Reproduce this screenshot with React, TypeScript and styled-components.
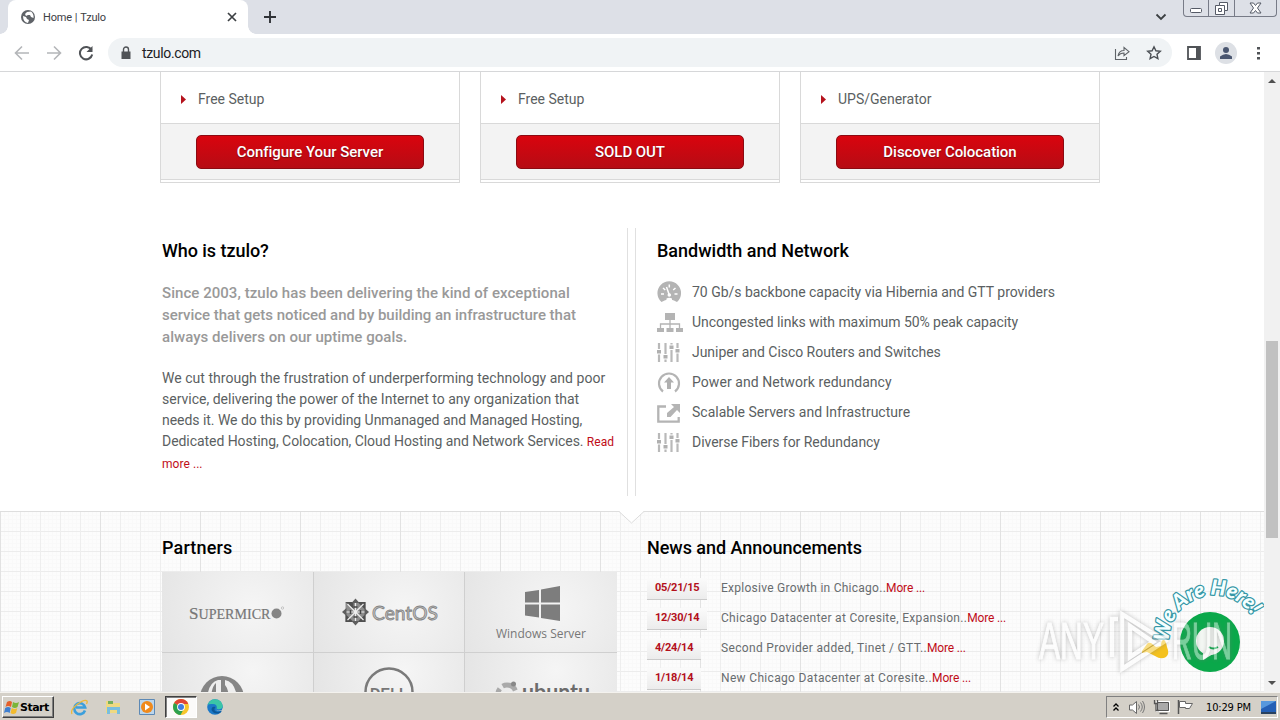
import type { ReactNode } from "react";
import styled, { createGlobalStyle, css } from "styled-components";

const GlobalStyle = createGlobalStyle`
  * {
    box-sizing: border-box;
  }
  body {
    margin: 0;
    overflow: hidden;
    font-family: Roboto, "Liberation Sans", sans-serif;
  }
  svg {
    display: block;
    flex-shrink: 0;
  }
`;

const Screen = styled.div`
  position: relative;
  width: 1280px;
  height: 720px;
  display: flex;
  flex-direction: column;
  overflow: hidden;
  background: #fff;
`;

/* browser chrome */

const TabStrip = styled.div`
  height: 34px;
  display: flex;
  background: #dde0e7;
  padding-left: 8px;
`;

const Tab = styled.div`
  position: relative;
  width: 240px;
  height: 34px;
  padding: 0 10px 0 13px;
  display: flex;
  align-items: center;
  background: #fff;
  border-radius: 8px 8px 0 0;
  &::before,
  &::after {
    content: "";
    position: absolute;
    bottom: 0;
    width: 8px;
    height: 8px;
  }
  &::before {
    left: -8px;
    background: radial-gradient(circle at 0 0, transparent 7.5px, #fff 8px);
  }
  &::after {
    right: -8px;
    background: radial-gradient(circle at 100% 0, transparent 7.5px, #fff 8px);
  }
`;

const TabTitle = styled.span`
  flex: 1;
  margin-left: 8px;
  font-size: 11px;
  letter-spacing: -0.2px;
  word-spacing: 0.5px;
  color: #3c4043;
`;

const NewTab = styled.div`
  padding: 11px 0 0 16px;
`;

const StripRight = styled.div`
  margin-left: auto;
  display: flex;
  align-items: flex-start;
`;

const Chevron = styled.div`
  padding: 13px 16px 0 0;
`;

const WindowButtons = styled.div`
  display: flex;
  width: 94px;
  height: 17px;
  margin-right: 3px;
  border: 1px solid #777b87;
  border-top: none;
  border-radius: 0 0 4px 4px;
`;

const WindowButton = styled.div<{ $w: number }>`
  width: ${(p) => p.$w}px;
  display: flex;
  align-items: center;
  justify-content: center;
  & + & {
    border-left: 1px solid #777b87;
  }
`;

const Toolbar = styled.div`
  height: 38px;
  display: flex;
  align-items: center;
  padding: 0 14px;
  border-bottom: 1px solid #d6d7d9;
  background: #fff;
`;

const NavButtons = styled.div`
  display: flex;
  width: 94px;
  gap: 16px;
`;

const AddressBar = styled.div`
  width: 1064px;
  height: 29px;
  border-radius: 15px;
  background: #f0f3f5;
  display: flex;
  align-items: center;
  padding: 0 10px 0 12px;
`;

const Url = styled.span`
  flex: 1;
  margin-left: 10px;
  font-size: 14px;
  letter-spacing: -0.35px;
  color: #202124;
`;

const BarIcons = styled.div`
  display: flex;
  gap: 16px;
`;

const ToolbarRight = styled.div`
  display: flex;
  align-items: center;
  margin-left: 15px;
  gap: 14px;
`;

const Avatar = styled.div`
  width: 22px;
  height: 22px;
  border-radius: 50%;
  background: #dde0e5;
  display: flex;
  align-items: center;
  justify-content: center;
`;

/* page */

const Viewport = styled.div`
  height: 620px;
  display: flex;
`;

const Page = styled.div`
  width: 1264px;
  height: 620px;
  overflow: hidden;
  display: flex;
  flex-direction: column;
`;

const Scrollbar = styled.div`
  width: 16px;
  display: flex;
  flex-direction: column;
  align-items: center;
  justify-content: space-between;
  background: #f1f1f1;
  padding: 7px 0 7px;
`;

const Thumb = styled.div`
  width: 12px;
  height: 197px;
  margin-top: 114px;
  background: #c1c1c1;
`;

const Cards = styled.div`
  flex-shrink: 0;
  display: flex;
  gap: 20px;
  padding-left: 160px;
`;

const Card = styled.div`
  width: 300px;
  height: 111px;
  border: 1px solid #d9d9d9;
  border-top: none;
`;

const Feature = styled.div`
  height: 51px;
  display: flex;
  align-items: center;
  gap: 12px;
  padding: 3px 0 0 20px;
  font-size: 14px;
  color: #5b5f62;
`;

const CardFooter = styled.div`
  height: 57px;
  padding: 11px 35px 0;
  background: #f3f3f3;
  border-top: 1px solid #d9d9d9;
  border-bottom: 1px solid #d9d9d9;
`;

const RedButton = styled.button`
  display: block;
  width: 228px;
  height: 34px;
  padding: 0;
  border: 1px solid #8c0a12;
  border-radius: 5px;
  background: linear-gradient(#d9040e, #b60c14);
  font-family: inherit;
  font-size: 15px;
  font-weight: 500;
  letter-spacing: -0.05px;
  color: #fff;
  text-shadow: 0 1px 1px #7d0a10;
`;

const Info = styled.div`
  flex-shrink: 0;
  height: 268px;
  margin: 45px 0 15px;
  padding-left: 162px;
  display: flex;
`;

const About = styled.div`
  width: 465px;
  padding-top: 12px;
  white-space: nowrap;
`;

const Divider = styled.div`
  width: 9px;
  border-left: 1px solid #e0e0e0;
  border-right: 1px solid #e0e0e0;
`;

const Network = styled.div`
  padding: 12px 0 0 21px;
`;

const Heading = styled.h2<{ $spacing?: number }>`
  margin: 0;
  font-size: 18px;
  line-height: 22px;
  font-weight: 500;
  letter-spacing: ${(p) => p.$spacing ?? 0}px;
  color: #000;
`;

const Lead = styled.p`
  margin: 20px 0 20px;
  font-size: 15px;
  line-height: 22px;
  font-weight: 500;
  color: #999;
`;

const Text = styled.p`
  margin: 0;
  font-size: 14px;
  line-height: 21px;
  color: #5b5f62;
`;

const Line = styled.span<{ $spacing: number }>`
  display: block;
  letter-spacing: ${(p) => p.$spacing}px;
`;

const RedLink = styled.a`
  font-size: 12px;
  letter-spacing: 0.05px;
  color: #c00d18;
`;

const FeatureRow = styled.div<{ $spacing: number }>`
  height: 30px;
  display: flex;
  align-items: center;
  gap: 9px;
  font-size: 14px;
  color: #5b5f62;
  letter-spacing: ${(p) => p.$spacing}px;
  white-space: nowrap;
`;

const FeatureList = styled.div`
  margin-top: 15px;
`;

const Lower = styled.div`
  position: relative;
  flex-shrink: 0;
  height: 181px;
  display: flex;
  padding: 25px 0 0 162px;
  border-top: 1px solid #dedede;
  background-color: #fcfcfc;
  background-image:
    linear-gradient(90deg, #e2e2e2 1px, transparent 1px),
    linear-gradient(90deg, #eeeeee 1px, transparent 1px),
    linear-gradient(#ececec 1px, transparent 1px),
    linear-gradient(90deg, #f9f9f9 1px, transparent 1px),
    linear-gradient(#f9f9f9 1px, transparent 1px);
  background-size: 100px 100px, 20px 20px, 20px 20px, 4px 4px, 4px 4px;
  background-position: 0 0, 0 0, 0 19px, 0 0, 0 3px;
`;

const Notch = styled.div`
  position: absolute;
  left: 619px;
  top: -1px;
`;

const Partners = styled.div`
  width: 485px;
`;

const PartnerGrid = styled.div`
  width: 455px;
  margin-top: 13px;
  display: grid;
  grid-template-columns: 152px 151px 152px;
  grid-template-rows: 81px 39px;
`;

const Partner = styled.div<{ $edge?: boolean }>`
  overflow: hidden;
  border-bottom: 1px solid #cfcfcf;
  ${(p) =>
    !p.$edge &&
    css`
      border-right: 1px solid #cfcfcf;
    `}
  background: radial-gradient(circle at 60% 45%, #f5f5f5, #e3e3e3 110%);
  &:nth-child(n + 4) {
    border-bottom: none;
  }
`;

const News = styled.div`
  white-space: nowrap;
`;

const NewsList = styled.div`
  margin-top: 13px;
`;

const NewsRow = styled.div`
  height: 30px;
  display: flex;
  align-items: center;
`;

const DateCell = styled.div`
  width: 74px;
  display: flex;
`;

const DateBadge = styled.div<{ $w: number }>`
  width: ${(p) => p.$w}px;
  height: 22px;
  margin-top: 3px;
  padding-left: 8px;
  line-height: 20px;
  font-size: 11px;
  font-weight: 700;
  letter-spacing: -0.2px;
  color: #b30f1b;
  background: linear-gradient(#fbfbfb, #ececec);
  border-bottom: 1px solid #cbcbcb;
`;

const NewsText = styled.span<{ $spacing: number }>`
  padding-top: 2px;
  font-size: 12px;
  color: #686c6f;
  letter-spacing: ${(p) => p.$spacing}px;
  ${RedLink} {
    letter-spacing: -0.15px;
  }
`;

const Chat = styled.div`
  position: absolute;
  left: 1140px;
  top: 576px;
`;

const Watermark = styled.div`
  position: absolute;
  left: 1030px;
  top: 602px;
  opacity: 0.45;
  filter: drop-shadow(0 0 2px #777);
`;

/* taskbar */

const Taskbar = styled.div`
  position: relative;
  height: 28px;
  display: flex;
  align-items: center;
  padding: 2px 2px 0;
  background: #d4d0c8;
  box-shadow: inset 0 2px 0 -1px #f4f2ee;
`;

const StartButton = styled.div`
  width: 52px;
  height: 22px;
  display: flex;
  align-items: center;
  padding-left: 1px;
  font-family: "DejaVu Sans", sans-serif;
  font-size: 11px;
  font-weight: 700;
  letter-spacing: -0.5px;
  color: #000;
  border: 1px solid;
  border-color: #fff #404040 #404040 #fff;
  box-shadow: inset -1px -1px 0 #808080;
`;

const Launchers = styled.div`
  display: flex;
  align-items: center;
  margin-left: 8px;
`;

const Launcher = styled.div<{ $active?: boolean }>`
  width: 34px;
  height: 22px;
  display: flex;
  align-items: center;
  justify-content: center;
  ${(p) =>
    p.$active &&
    css`
      width: 32px;
      margin: 0 1px;
      background: #fbfaf9;
      border: 1px solid;
      border-color: #404040 #fff #fff #404040;
      box-shadow: inset 1px 1px 0 #808080;
    `}
`;

const Tray = styled.div`
  margin-left: auto;
  width: 172px;
  height: 22px;
  display: flex;
  align-items: center;
  padding-left: 5px;
  border: 1px solid;
  border-color: #808080 #fff #fff #808080;
`;

const Clock = styled.span`
  margin: 0 9px 0 13px;
  width: 46px;
  white-space: nowrap;
  font-family: "DejaVu Sans Condensed", "DejaVu Sans", sans-serif;
  font-stretch: condensed;
  font-size: 11px;
  letter-spacing: -0.15px;
  color: #000;
`;

const GaugeIcon = () => (
  <svg width="26" height="24" viewBox="0 0 26 24">
    <path d="M4.500 22A11.800 11.800 0 1 1 20 22L17 20.500Q12 18.500 7.500 20.500Z" fill="#b4b4b4" />
    <path d="M4 14h3M17.500 14h3M6 8l2.300 2M18.500 8l-2.300 2M12.300 4.500v3M12.300 15L9.500 7" stroke="#fff" strokeWidth="1.500" />
    <path d="M9.500 24v-5.500q2.800-1.500 5.500 0V24z" fill="#fff" />
    <circle cx="12.300" cy="15" r="1.800" fill="#fff" />
  </svg>
);

const TreeIcon = () => (
  <svg width="26" height="24" viewBox="0 0 26 24">
    <path d="M8 3h10v7H8zM0 18h7v4H0zM9.500 18h7v4h-7zM19 18h7v4h-7z" fill="#b4b4b4" />
    <path d="M13 10v8M3.500 18v-4h19v4" fill="none" stroke="#b4b4b4" strokeWidth="1.300" />
  </svg>
);

const SlidersIcon = () => (
  <svg width="26" height="24" viewBox="0 0 26 24">
    <path d="M2 3v19M8.500 3v19M14.500 3v19M20.500 3v19" stroke="#b9b9b9" strokeWidth="2.200" />
    <path d="M0 11.700h4M6.500 16.700h4M12.500 7.200h4M18.500 10.700h4" stroke="#fff" strokeWidth="5.500" />
    <path d="M0 11.700h4M6.500 16.700h4M12.500 7.200h4M18.500 10.700h4" stroke="#b0b0b0" strokeWidth="3.400" />
  </svg>
);

const UploadIcon = () => (
  <svg width="26" height="24" viewBox="0 0 26 24">
    <path d="M6 21.500A10 10 0 1 1 18 21.500" fill="none" stroke="#b4b4b4" strokeWidth="2.200" />
    <path d="M12 7l5 5.500h-3V19h-4v-6.500H7z" fill="#b0b0b0" />
  </svg>
);

const ShareOutIcon = () => (
  <svg width="26" height="24" viewBox="0 0 26 24">
    <path d="M9 6.500H1.300v15.200h20.400V17" fill="none" stroke="#b4b4b4" strokeWidth="2.300" />
    <path d="M14 4h9v9l-3-3-6.500 7h-3.500V13L17 7z" fill="#b4b4b4" />
  </svg>
);

const SupermicroLogo = () => (
  <svg width="151" height="80" viewBox="0 0 151 80">
    <text x="27" y="47" fontFamily="Liberation Serif, serif" fill="#777" stroke="#777" strokeWidth="0.200">
      <tspan fontSize="17">S</tspan>
      <tspan fontSize="14.500" textLength="72" lengthAdjust="spacingAndGlyphs">UPERMICR</tspan>
    </text>
    <circle cx="114.500" cy="41.500" r="5" fill="#858585" />
    <circle cx="120.500" cy="36" r="1.200" fill="none" stroke="#aaa" strokeWidth="0.600" />
  </svg>
);

const CentosLogo = () => (
  <svg width="150" height="80" viewBox="0 0 150 80">
    <g transform="translate(41.500 40)">
      <path d="M-10-10h20v20h-20z" fill="#8c8c8c" />
      <path d="M-10-10h8v8zM10-10v8L2-10zM10 10H2l8-8zM-10 10v-8l8 8z" fill="#4f4f4f" />
      <path d="M-13.500 0l4.500-4v8zM13.500 0L9-4v8zM0-13.500L-4-9h8zM0 13.500L-4 9h8z" fill="#5e5e5e" />
      <path d="M-9 0H9M0-9V9M-8-8L8 8M8-8L-8 8" stroke="#eee" strokeWidth="1.200" />
      <path d="M-5-2v4M5-2v4M-2-5h4M-2 5h4" stroke="#444" strokeWidth="1.500" />
    </g>
    <text x="58" y="48" fontFamily="Lato, sans-serif" fontSize="20" fill="#c8c8c8" stroke="#858585" strokeWidth="0.900" textLength="66" lengthAdjust="spacingAndGlyphs">
      CentOS
    </text>
  </svg>
);

const WindowsLogo = () => (
  <svg width="152" height="80" viewBox="0 0 152 80">
    <path d="M60 20l14-2v12.500H60zM76 17.500L95 14v16.500H76zM60 32.500h14v13L60 43.500zM76 32.500h19V49l-19-3z" fill="#7d7d7d" />
    <text x="31" y="65.500" fontFamily="Open Sans, sans-serif" fontSize="12.500" fill="#777" textLength="90" lengthAdjust="spacingAndGlyphs">
      Windows Server
    </text>
  </svg>
);

const RoundLogo = () => (
  <svg width="151" height="80" viewBox="0 0 151 80">
    <ellipse cx="60" cy="45" rx="22" ry="22" fill="#858585" />
    <path d="M45 50q0-20 11-23h3v60h-5V30q-6 5-5 25zM63 27q13 2 13 30h-9q1-20-4-25z" fill="#eee" />
  </svg>
);

const DellLogo = () => (
  <svg width="150" height="80" viewBox="0 0 150 80">
    <circle cx="75" cy="39" r="23.500" fill="none" stroke="#7a7a7a" strokeWidth="2.500" />
    <text x="56" y="46.500" fontFamily="Liberation Sans, sans-serif" fontSize="16" fontWeight="700" fill="#777" textLength="38" lengthAdjust="spacingAndGlyphs">
      DELL
    </text>
  </svg>
);

const UbuntuLogo = () => (
  <svg width="152" height="80" viewBox="0 0 152 80">
    <circle cx="42" cy="41" r="9" fill="none" stroke="#aaa" strokeWidth="5" strokeDasharray="15 3.800" />
    <circle cx="48.500" cy="31" r="2.500" fill="#888" />
    <text x="57" y="47" fontFamily="Lato, sans-serif" fontSize="23" fontWeight="700" fill="#6c6c6c" textLength="68" lengthAdjust="spacingAndGlyphs">
      ubuntu
    </text>
  </svg>
);

const ChatWidget = () => (
  <svg width="124" height="100" viewBox="0 0 124 100">
    <defs>
      <path id="arc" d="M29 66A45 45 0 0 1 116 48" />
    </defs>
    <circle cx="70" cy="66" r="30" fill="#0aa84a" />
    <circle cx="70" cy="65" r="14" fill="#f3f7f3" />
    <path d="M63 76v8l10-6z" fill="#f3f7f3" />
    <path d="M69 71q4 3 9 0" stroke="#0aa84a" strokeWidth="2" fill="none" />
    <text fontFamily="Lato, sans-serif" fontSize="21" fontWeight="900" fontStyle="italic" fill="#f4ffff" stroke="#3597a6" strokeWidth="2.500" paintOrder="stroke" strokeLinejoin="round">
      <textPath href="#arc" textLength="117" lengthAdjust="spacing">We Are Here!</textPath>
    </text>
    <path d="M2 75l5-7q1-2 4-1l5 4 5-1q0-7 3-6 2 1 3 7 3 7-1 10-5 3-11-1l-8-4-5 1z" fill="#f4c11d" />
  </svg>
);

const WatermarkArt = () => (
  <svg width="214" height="78" viewBox="0 0 214 78">
    <g fill="#fff" stroke="#fff" strokeWidth="1" fontFamily="Liberation Sans, sans-serif" fontSize="51">
      <text x="9" y="57" textLength="65" lengthAdjust="spacingAndGlyphs">
        ANY
      </text>
      <text x="142" y="57" textLength="60" lengthAdjust="spacingAndGlyphs">
        RUN
      </text>
    </g>
    <path d="M82 55V17h6M92 12v55l43-28zM100 24v31l23-15z" fill="none" stroke="#fff" strokeWidth="4.500" />
  </svg>
);

const cards = [
  { feature: "Free Setup", action: "Configure Your Server" },
  { feature: "Free Setup", action: "SOLD OUT" },
  { feature: "UPS/Generator", action: "Discover Colocation" },
];

const features: { icon: ReactNode; text: string; spacing: number }[] = [
  { icon: <GaugeIcon />, text: "70 Gb/s backbone capacity via Hibernia and GTT providers", spacing: -0.025 },
  { icon: <TreeIcon />, text: "Uncongested links with maximum 50% peak capacity", spacing: -0.06 },
  { icon: <SlidersIcon />, text: "Juniper and Cisco Routers and Switches", spacing: -0.04 },
  { icon: <UploadIcon />, text: "Power and Network redundancy", spacing: 0.06 },
  { icon: <ShareOutIcon />, text: "Scalable Servers and Infrastructure", spacing: 0.01 },
  { icon: <SlidersIcon />, text: "Diverse Fibers for Redundancy", spacing: -0.04 },
];

const news = [
  { date: "05/21/15", w: 60, text: "Explosive Growth in Chicago..", spacing: 0.26 },
  { date: "12/30/14", w: 60, text: "Chicago Datacenter at Coresite, Expansion..", spacing: 0.31 },
  { date: "4/24/14", w: 54, text: "Second Provider added, Tinet / GTT..", spacing: 0.33 },
  { date: "1/18/14", w: 54, text: "New Chicago Datacenter at Coresite..", spacing: 0.33 },
];

const BrowserChrome = () => (
  <>
    <TabStrip>
      <Tab>
        <svg width="14" height="14" viewBox="0 0 14 14">
          <circle cx="7" cy="7" r="7" fill="#5f6368" />
          <path d="M2 6l3 1 1 2 2 1-1 3Q2 12 2 6zM6 2l4-.5Q13 4 12.500 8L10 7 9 5H7L5 6 4 4z" fill="#fff" />
        </svg>
        <TabTitle>Home | Tzulo</TabTitle>
        <svg width="12" height="12" viewBox="0 0 12 12">
          <path d="M2 2l8 8M10 2l-8 8" stroke="#3c4043" strokeWidth="1.700" />
        </svg>
      </Tab>
      <NewTab>
        <svg width="12" height="12" viewBox="0 0 12 12">
          <path d="M6 0v12M0 6h12" stroke="#303338" strokeWidth="1.900" />
        </svg>
      </NewTab>
      <StripRight>
        <Chevron>
          <svg width="12" height="8" viewBox="0 0 12 8">
            <path d="M1.500 1.500L6 6l4.500-4.500" fill="none" stroke="#3c4043" strokeWidth="1.800" />
          </svg>
        </Chevron>
        <WindowButtons>
          <WindowButton $w={24}>
            <svg width="12" height="12" viewBox="0 0 12 12">
              <rect x="0.500" y="6.500" width="11" height="4" rx="1" fill="#fff" stroke="#555a66" />
            </svg>
          </WindowButton>
          <WindowButton $w={26}>
            <svg width="13" height="13" viewBox="0 0 13 13">
              <path d="M4.500.5h8v8h-3v4h-9v-9h4z" fill="#fff" stroke="#555a66" />
              <path d="M4.500 3.500h5v5M3.500 6.500h3v3h-3z" fill="none" stroke="#555a66" />
            </svg>
          </WindowButton>
          <WindowButton $w={42}>
            <svg width="13" height="12" viewBox="0 0 13 12">
              <path d="M1 1h3.500l2 2.500L8.500 1H12L8.500 6l3.500 5H8.500l-2-2.500-2 2.500H1l3.500-5z" fill="#fff" stroke="#555a66" />
            </svg>
          </WindowButton>
        </WindowButtons>
      </StripRight>
    </TabStrip>
    <Toolbar>
      <NavButtons>
        <svg width="16" height="16" viewBox="0 0 16 16">
          <path d="M15 8H2M8 1.500L1.500 8 8 14.500" fill="none" stroke="#b4b6b9" strokeWidth="1.600" />
        </svg>
        <svg width="16" height="16" viewBox="0 0 16 16">
          <path d="M1 8h13M8 1.500L14.500 8 8 14.500" fill="none" stroke="#b4b6b9" strokeWidth="1.600" />
        </svg>
        <svg width="16" height="16" viewBox="0 0 16 16">
          <path d="M13.500 5A6.200 6.200 0 1 0 14.200 9.500" fill="none" stroke="#505357" strokeWidth="2" />
          <path d="M14.500 1v6H8.500z" fill="#505357" />
        </svg>
      </NavButtons>
      <AddressBar>
        <svg width="12" height="14" viewBox="0 0 12 14">
          <path d="M1.500 5.500h9V13h-9z" fill="#505357" />
          <path d="M3.500 6V3.500a2.500 2.500 0 0 1 5 0V6" fill="none" stroke="#505357" strokeWidth="1.400" />
        </svg>
        <Url>tzulo.com</Url>
        <BarIcons>
          <svg width="16" height="16" viewBox="0 0 16 16">
            <path d="M1.500 4v10.500h11V12M4 11q1-5.500 6-5.500V2.500l5 4.200-5 4V8q-4 0-6 3z" fill="none" stroke="#5f6368" strokeWidth="1.100" />
          </svg>
          <svg width="16" height="16" viewBox="0 0 16 16">
            <path d="M8 1.800l1.900 4 4.400.5-3.300 3 .9 4.400L8 11.500l-3.900 2.200.9-4.400-3.300-3 4.400-.5z" fill="none" stroke="#4b4f54" strokeWidth="1.400" />
          </svg>
        </BarIcons>
      </AddressBar>
      <ToolbarRight>
        <svg width="14" height="14" viewBox="0 0 14 14">
          <path d="M1 1h12v12H1z" fill="none" stroke="#505357" strokeWidth="1.800" />
          <path d="M9 1h4v12H9z" fill="#505357" />
        </svg>
        <Avatar>
          <svg width="12" height="12" viewBox="0 0 12 12">
            <circle cx="6" cy="3" r="3" fill="#4a5670" />
            <path d="M0 12V9.500q6-5 12 0V12z" fill="#4a5670" />
          </svg>
        </Avatar>
        <svg width="14" height="14" viewBox="0 0 14 14">
          <path d="M6 1h3v2.500H6zM6 6h3v2.500H6zM6 11h3v2.500H6z" fill="#505357" />
        </svg>
      </ToolbarRight>
    </Toolbar>
  </>
);

const App = () => {
  return (
    <Screen>
      <GlobalStyle />
      <BrowserChrome />
      <Viewport>
        <Page>
          <Cards>
            {cards.map((card) => (
              <Card key={card.action}>
                <Feature>
                  <svg width="5" height="9" viewBox="0 0 5 9">
                    <path d="M0 0l5 4.500L0 9z" fill="#b5131d" />
                  </svg>
                  {card.feature}
                </Feature>
                <CardFooter>
                  <RedButton>{card.action}</RedButton>
                </CardFooter>
              </Card>
            ))}
          </Cards>
          <Info>
            <About>
              <Heading $spacing={-0.05}>Who is tzulo?</Heading>
              <Lead>
                <Line $spacing={0.05}>Since 2003, tzulo has been delivering the kind of exceptional</Line>
                <Line $spacing={-0.03}>service that gets noticed and by building an infrastructure that</Line>
                <Line $spacing={0.04}>always delivers on our uptime goals.</Line>
              </Lead>
              <Text>
                <Line $spacing={0.03}>We cut through the frustration of underperforming technology and poor</Line>
                <Line $spacing={0}>service, delivering the power of the Internet to any organization that</Line>
                <Line $spacing={-0.04}>needs it. We do this by providing Unmanaged and Managed Hosting,</Line>
                <Line $spacing={-0.06}>
                  Dedicated Hosting, Colocation, Cloud Hosting and Network Services. <RedLink>Read</RedLink>
                </Line>
                <Line $spacing={0}>
                  <RedLink>more ...</RedLink>
                </Line>
              </Text>
            </About>
            <Divider />
            <Network>
              <Heading>Bandwidth and Network</Heading>
              <FeatureList>
                {features.map((f) => (
                  <FeatureRow key={f.text} $spacing={f.spacing}>
                    {f.icon}
                    {f.text}
                  </FeatureRow>
                ))}
              </FeatureList>
            </Network>
          </Info>
          <Lower>
            <Notch>
              <svg width="25" height="13" viewBox="0 0 25 13">
                <path d="M0 0l12.500 12L25 0z" fill="#fff" />
                <path d="M0 .5L12.500 12 25 .5" fill="none" stroke="#dcdcdc" />
              </svg>
            </Notch>
            <Partners>
              <Heading $spacing={0.15}>Partners</Heading>
              <PartnerGrid>
                <Partner><SupermicroLogo /></Partner>
                <Partner><CentosLogo /></Partner>
                <Partner $edge><WindowsLogo /></Partner>
                <Partner><RoundLogo /></Partner>
                <Partner><DellLogo /></Partner>
                <Partner $edge><UbuntuLogo /></Partner>
              </PartnerGrid>
            </Partners>
            <News>
              <Heading $spacing={-0.03}>News and Announcements</Heading>
              <NewsList>
                {news.map((n) => (
                  <NewsRow key={n.date}>
                    <DateCell>
                      <DateBadge $w={n.w}>{n.date}</DateBadge>
                    </DateCell>
                    <NewsText $spacing={n.spacing}>
                      {n.text}
                      <RedLink>More ...</RedLink>
                    </NewsText>
                  </NewsRow>
                ))}
              </NewsList>
            </News>
          </Lower>
        </Page>
        <Scrollbar>
          <svg width="8" height="4" viewBox="0 0 8 4">
            <path d="M0 4l4-4 4 4z" fill="#505050" />
          </svg>
          <Thumb />
          <svg width="8" height="4" viewBox="0 0 8 4">
            <path d="M0 0l4 4 4-4z" fill="#505050" />
          </svg>
        </Scrollbar>
      </Viewport>
      <Chat>
        <ChatWidget />
      </Chat>
      <Watermark>
        <WatermarkArt />
      </Watermark>
      <Taskbar>
        <StartButton>
          <svg width="16" height="15" viewBox="0 0 16 15">
            <path d="M3 2q3-2 5 0L7 7Q4 5 1.500 7z" fill="#e5602b" />
            <path d="M9 2q3 2 6 0l-1.500 5Q11 9 8 7z" fill="#7bb53a" />
            <path d="M1.200 8q3-2 5.500 0l-1 5Q3 11 0 13z" fill="#3f7fd0" />
            <path d="M7.800 8q3 2 5.500 0L12 13q-3 2-5.500 0z" fill="#f3bb2e" />
          </svg>
          Start
        </StartButton>
        <Launchers>
          <Launcher>
            <svg width="17" height="17" viewBox="0 0 17 17">
              <path d="M14 11.500A5.500 5.500 0 1 1 14.200 8.500H5" fill="none" stroke="#3c9fdc" strokeWidth="2.600" />
              <path d="M1 15Q-1 11 6 5.500 14-.5 16 2q.6 1-.5 3" fill="none" stroke="#edb93a" strokeWidth="1.300" />
            </svg>
          </Launcher>
          <Launcher>
            <svg width="17" height="16" viewBox="0 0 17 16">
              <path d="M1 2h5l1 2h8v10H1z" fill="#efd981" />
              <path d="M3 2h5v3H3z" fill="#75b05b" />
              <path d="M2 8h13v7h-3v-4H5v4H2z" fill="#79bede" />
            </svg>
          </Launcher>
          <Launcher>
            <svg width="16" height="16" viewBox="0 0 16 16">
              <path d="M.5.5h15v15H.5z" fill="#bcd6ec" stroke="#5d89b5" />
              <circle cx="8" cy="8" r="6" fill="#f08a1c" />
              <path d="M6 4.500L11 8l-5 3.500z" fill="#fff" />
            </svg>
          </Launcher>
          <Launcher $active>
            <svg width="16" height="16" viewBox="0 0 16 16">
              <circle cx="8" cy="8" r="8" fill="#f7c52b" />
              <path d="M8 8L1.100 4A8 8 0 0 1 14.900 4L15 5H8z" fill="#e04636" />
              <path d="M8 8L1.100 4A8 8 0 0 0 7.500 16L11 9.500z" fill="#2da14f" />
              <circle cx="8" cy="8" r="3.900" fill="#fff" />
              <circle cx="8" cy="8" r="3" fill="#3f7de0" />
            </svg>
          </Launcher>
          <Launcher>
            <svg width="16" height="16" viewBox="0 0 16 16">
              <circle cx="8" cy="8" r="7.800" fill="#1b78c8" />
              <path d="M.5 6Q3 0 8 .2q7 .3 7.800 7-.5 3.500-5 3-2-.3-1-1.700Q10 5 6 5 2 4.500.5 6z" fill="#3bc5a7" />
              <path d="M8.500 8q-3 4 2 5 3 .3 4.500-2-.5 1.500-2 3-6 2-8.500-3Q4.500 7 8.500 8z" fill="#0c5797" />
              <path d="M9.500 9.500q-1 2.500 5 2L16 9v3h-3q-4.500 0-3.500-2.500z" fill="#d4d0c8" />
            </svg>
          </Launcher>
        </Launchers>
        <Tray>
          <svg width="8" height="10" viewBox="0 0 8 10">
            <path d="M1.500 4.500L4 2l2.500 2.500M1.500 8.500L4 6l2.500 2.500" fill="none" stroke="#000" strokeWidth="1.300" />
          </svg>
          <svg width="73" height="18" viewBox="0 0 73 18">
            <path d="M9.500 7v5h3l4 3.500V3.500l-4 3.500z" fill="#fff" stroke="#666" />
            <path d="M18.500 6.500q2 2.500 0 5M20.500 4.500q3.500 4.500 0 9M22.500 3q4 6 0 12" fill="none" stroke="#777" />
            <path d="M37.500 4.500h11v8h-11z" fill="#aaa" stroke="#fff" strokeWidth="3" />
            <path d="M37.500 4.500h11v8h-11z" fill="#aaa" stroke="#555" />
            <path d="M39.500 15.500h8M34.500 2v3.500h3V2M36 6v6.500h3" fill="none" stroke="#555" strokeWidth="1.300" />
            <path d="M58.500 2v14" stroke="#555" strokeWidth="1.500" />
            <path d="M59.500 3.500h6v2h7l-3 5h-4v-1h-6z" fill="#fff" stroke="#666" />
          </svg>
          <Clock>10:29 PM</Clock>
          <svg width="15" height="13" viewBox="0 0 15 13">
            <path d="M0 0h15v11H0z" fill="#245fb5" />
            <path d="M0 0h15L0 8z" fill="#5798dd" />
            <path d="M0 11h15v2H0z" fill="#29415f" />
          </svg>
        </Tray>
      </Taskbar>
    </Screen>
  );
};

export default App;
